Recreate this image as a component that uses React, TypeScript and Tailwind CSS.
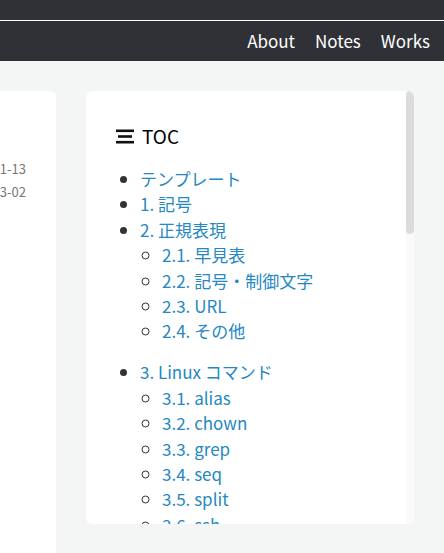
const toc = [
  { label: "テンプレート" },
  { label: "1. 記号" },
  {
    label: "2. 正規表現",
    children: ["2.1. 早見表", "2.2. 記号・制御文字", "2.3. URL", "2.4. その他"],
  },
  {
    label: "3. Linux コマンド",
    children: [
      "3.1. alias",
      "3.2. chown",
      "3.3. grep",
      "3.4. seq",
      "3.5. split",
      "3.6. ssh",
      "3.7. tar",
    ],
  },
];

const TocIcon = () => (
  <svg width="19" height="16" viewBox="0 0 19 16" className="shrink-0">
    <rect x="0" y="1.5" width="18" height="2.6" fill="#111" />
    <rect x="2" y="7.2" width="14" height="2.6" fill="#111" />
    <rect x="0" y="12.9" width="18" height="2.6" fill="#111" />
  </svg>
);

const App = () => {
  return (
    <div className="min-h-[553px] bg-[#f4f5f5] overflow-hidden font-['Noto_Sans_CJK_JP',sans-serif]">
      <div className="h-[21px] bg-[#2f3136] border-b border-white" />
      <nav className="h-10 bg-[#2f3136] flex items-center justify-end gap-5 pr-[14px] text-white text-[17px]">
        <span>About</span>
        <span>Notes</span>
        <span>Works</span>
      </nav>

      <div className="flex justify-end gap-[30px] pr-[30px] pt-[30px]">
        {/* left card, mostly scrolled out of view */}
        <div className="w-[300px] shrink-0 h-[470px] bg-white rounded-md pt-[66px] pr-[30px] text-right text-[13px] leading-[23px] text-[#777]">
          <div>作成日: 2021-01-13</div>
          <div>更新日: 2022-03-02</div>
        </div>

        {/* toc card */}
        <div className="w-[328px] shrink-0 h-[433px] bg-white rounded-md overflow-hidden flex">
          <div className="flex-1 overflow-hidden pt-[30px] pl-[30px]">
            <div className="flex items-center gap-[7px] text-[19px] leading-[30px] text-black">
              <TocIcon />
              <span>TOC</span>
            </div>
            <ul className="list-disc pl-6 mt-[15px] text-[17px] leading-[25.4px] text-[#333]">
              {toc.map((item) => (
                <li key={item.label}>
                  <a className="text-[#2588c2]">{item.label}</a>
                  {item.children && (
                    <ul className="list-[circle] pl-[22px] mb-[15.6px]">
                      {item.children.map((c) => (
                        <li key={c}>
                          <a className="text-[#2588c2]">{c}</a>
                        </li>
                      ))}
                    </ul>
                  )}
                </li>
              ))}
            </ul>
          </div>
          <div className="w-2 shrink-0 bg-[#fafafa]">
            <div className="h-[143px] bg-[#dcdcdc] rounded-full" />
          </div>
        </div>
      </div>
    </div>
  );
};

export default App;
